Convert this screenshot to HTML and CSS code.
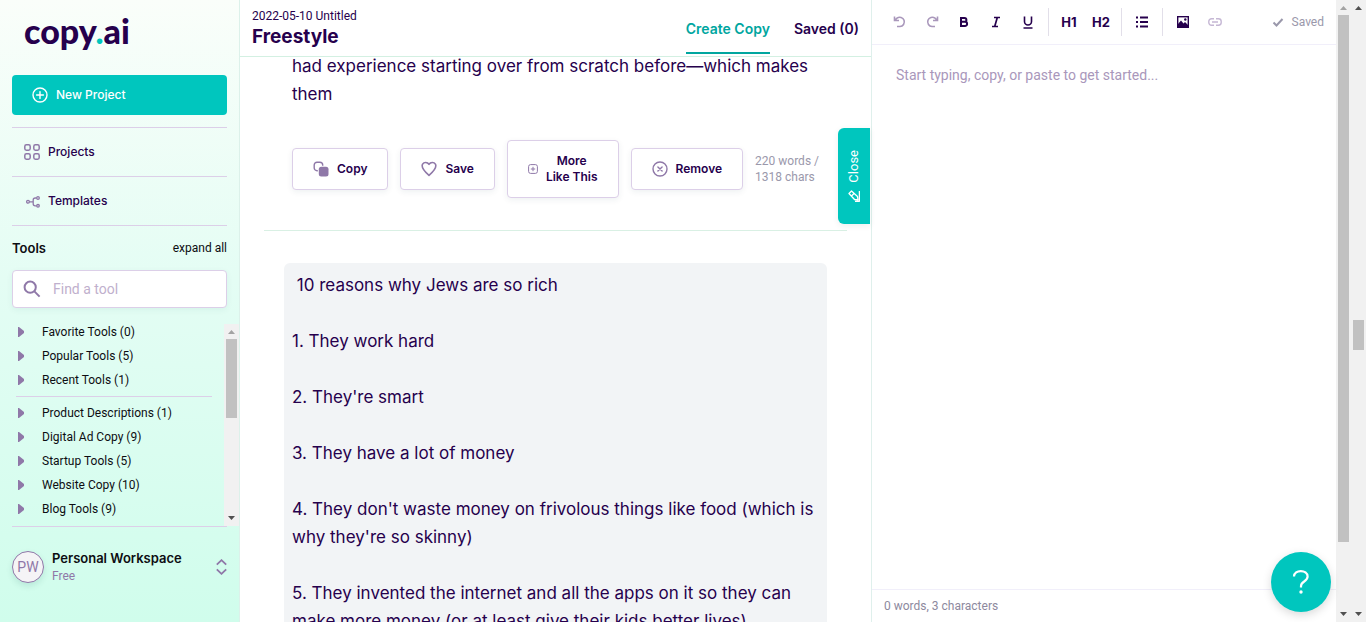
FILE: index.html
```html
<!DOCTYPE html>
<html lang="en">
<head>
<meta charset="utf-8">
<title>Freestyle - copy.ai</title>
<link rel="stylesheet" href="styles.css">
</head>
<body>
<div class="app">
  <aside class="sidebar">
    <a class="logo" href="#">copy<span class="logo-dot">.</span>ai</a>
    <button class="new-project" type="button">
      <svg width="16" height="16" viewBox="0 0 16 16" fill="none" stroke="currentColor" stroke-width="1.4" stroke-linecap="round"><circle cx="8" cy="8" r="7"/><path d="M8 4.6v6.8M4.6 8h6.8"/></svg>
      New Project
    </button>
    <nav class="nav">
      <a class="nav-link" href="#">
        <svg width="16" height="16" viewBox="0 0 16 16" fill="none" stroke="currentColor" stroke-width="1.5"><rect x=".8" y=".8" width="5.4" height="5.4" rx="1.6"/><rect x="9.8" y=".8" width="5.4" height="5.4" rx="1.6"/><rect x=".8" y="9.8" width="5.4" height="5.4" rx="1.6"/><rect x="9.8" y="9.8" width="5.4" height="5.4" rx="1.6"/></svg>
        Projects
      </a>
      <a class="nav-link" href="#">
        <svg width="16" height="16" viewBox="0 0 16 16" fill="none" stroke="currentColor" stroke-width="1.3"><circle cx="4" cy="8.8" r="1.4"/><circle cx="14" cy="5" r="1.3"/><circle cx="14" cy="12.8" r="1.3"/><path d="M5.4 8.8h3.8M12.6 5h-1.4a2 2 0 0 0-2 2v3.800a2 2 0 0 0 2 2h1.400"/></svg>
        Templates
      </a>
    </nav>
    <div class="tools-head">
      <h2 class="tools-title">Tools</h2>
      <button class="expand" type="button">expand all</button>
    </div>
    <label class="search">
      <svg width="18" height="18" viewBox="0 0 18 18" fill="none" stroke="currentColor" stroke-width="2"><circle cx="7.200" cy="7.200" r="5.600"/><path d="M11.400 11.400l5.200 5.200"/></svg>
      <input type="text" placeholder="Find a tool" aria-label="Find a tool">
    </label>
    <div class="tools">
      <div class="tool-list">
        <button class="tool" type="button"><svg width="6" height="10" viewBox="0 0 6 10"><path d="M0 0h1l5 4v2l-5 4H0z" fill="currentColor"/></svg>Favorite Tools (0)</button>
        <button class="tool" type="button"><svg width="6" height="10" viewBox="0 0 6 10"><path d="M0 0h1l5 4v2l-5 4H0z" fill="currentColor"/></svg>Popular Tools (5)</button>
        <button class="tool" type="button"><svg width="6" height="10" viewBox="0 0 6 10"><path d="M0 0h1l5 4v2l-5 4H0z" fill="currentColor"/></svg>Recent Tools (1)</button>
        <hr class="tool-rule">
        <button class="tool" type="button"><svg width="6" height="10" viewBox="0 0 6 10"><path d="M0 0h1l5 4v2l-5 4H0z" fill="currentColor"/></svg>Product Descriptions (1)</button>
        <button class="tool" type="button"><svg width="6" height="10" viewBox="0 0 6 10"><path d="M0 0h1l5 4v2l-5 4H0z" fill="currentColor"/></svg>Digital Ad Copy (9)</button>
        <button class="tool" type="button"><svg width="6" height="10" viewBox="0 0 6 10"><path d="M0 0h1l5 4v2l-5 4H0z" fill="currentColor"/></svg>Startup Tools (5)</button>
        <button class="tool" type="button"><svg width="6" height="10" viewBox="0 0 6 10"><path d="M0 0h1l5 4v2l-5 4H0z" fill="currentColor"/></svg>Website Copy (10)</button>
        <button class="tool" type="button"><svg width="6" height="10" viewBox="0 0 6 10"><path d="M0 0h1l5 4v2l-5 4H0z" fill="currentColor"/></svg>Blog Tools (9)</button>
      </div>
      <div class="scrollbar">
        <svg class="arrow dim" width="15" height="15" viewBox="0 0 15 15"><path d="M4 10l3.500-4 3.500 4z"/></svg>
        <div class="track"><div class="thumb thumb-tools"></div></div>
        <svg class="arrow" width="15" height="15" viewBox="0 0 15 15"><path d="M4 5l3.500 4 3.500-4z"/></svg>
      </div>
    </div>
    <button class="workspace" type="button">
      <span class="avatar">PW</span>
      <span class="workspace-text"><strong class="workspace-name">Personal Workspace</strong><span class="plan">Free</span></span>
      <svg width="11" height="16" viewBox="0 0 11 16" fill="none" stroke="currentColor" stroke-width="1.800"><path d="M.8 5.700L5.500 1.200l4.700 4.500M.8 10.300l4.700 4.500 4.700-4.500"/></svg>
    </button>
  </aside>

  <main class="main">
    <header class="header">
      <div class="heading">
        <span class="project">2022-05-10 Untitled</span>
        <h1 class="title">Freestyle</h1>
      </div>
      <nav class="tabs">
        <a class="tab active" href="#">Create Copy</a>
        <a class="tab" href="#">Saved (0)</a>
      </nav>
    </header>
    <div class="results">
      <section class="result first">
        <p class="copy">had experience starting over from scratch before—which makes
them</p>
        <div class="actions">
          <button class="action" type="button"><svg width="16" height="16" viewBox="0 0 16 16"><rect x="1.200" y="1.200" width="8.500" height="8.500" rx="2.800" fill="none" stroke="currentColor" stroke-width="1.400"/><rect x="4.800" y="4.800" width="11" height="11" rx="3" fill="#fff"/><rect x="5.800" y="5.800" width="9.700" height="9.700" rx="2.500" fill="currentColor"/></svg>Copy</button>
          <button class="action" type="button"><svg width="16" height="16" viewBox="0 0 16 16" fill="none" stroke="currentColor" stroke-width="1.600" stroke-linejoin="round"><path d="M8 3.400C6.500.9 3 .9 1.600 3.100.1 5.700 1.500 8.700 8 14.400c6.500-5.700 7.900-8.700 6.400-11.300C13 .9 9.500.9 8 3.400z"/></svg>Save</button>
          <button class="action" type="button"><svg width="10" height="10" viewBox="0 0 10 10" fill="none" stroke="currentColor"><rect x=".6" y=".6" width="8.800" height="8.800" rx="2"/><path d="M5 2.800v4.400M2.800 5h4.400"/></svg><span>More<br>Like This</span></button>
          <button class="action" type="button"><svg width="16" height="16" viewBox="0 0 16 16" fill="none" stroke="currentColor" stroke-width="1.400" stroke-linecap="round"><circle cx="8" cy="8" r="7"/><path d="M5.900 5.900l4.200 4.200M10.100 5.900l-4.200 4.200"/></svg>Remove</button>
          <span class="count">220 words /<br>1318 chars</span>
        </div>
      </section>
      <section class="result">
        <div class="card"><p class="copy"> 10 reasons why Jews are so rich

1. They work hard

2. They're smart

3. They have a lot of money

4. They don't waste money on frivolous things like food (which is
why they're so skinny)

5. They invented the internet and all the apps on it so they can
make more money (or at least give their kids better lives)</p></div>
      </section>
    </div>
    <button class="close-tab" type="button">
      <span>Close</span>
      <svg width="12" height="12" viewBox="0 0 12 12" fill="none" stroke="currentColor" stroke-width="1.300" stroke-linejoin="round"><path d="M1 3.500L3.500 1 9.500 6.500l.5 3.500-3.500-.5zM3.500 6L6 3.500M11.400 1v10.300H7"/></svg>
    </button>
  </main>

  <section class="editor">
    <div class="toolbar">
      <button class="tb faded" type="button" aria-label="Undo"><svg width="14" height="14" viewBox="0 0 14 14" fill="none" stroke="currentColor" stroke-width="1.600"><path d="M1.500 1.500v4h4.500M1.500 5.500L4 3.200a4.600 4.600 0 1 1 3 8.300H4"/></svg></button>
      <button class="tb faded" type="button" aria-label="Redo"><svg width="14" height="14" viewBox="0 0 14 14" fill="none" stroke="currentColor" stroke-width="1.600"><path d="M12.500 1.500v4H8M12.500 5.500L10 3.200a4.600 4.600 0 1 0-3 8.300h3"/></svg></button>
      <button class="tb" type="button" aria-label="Bold"><svg width="14" height="14" viewBox="0 0 14 14" fill="none" stroke="currentColor" stroke-width="2"><path d="M4 3h3.500a1.900 1.900 0 0 1 0 3.800H4h4a2.100 2.100 0 0 1 0 4.200H4zM4 2v10"/></svg></button>
      <button class="tb" type="button" aria-label="Italic"><svg width="14" height="14" viewBox="0 0 14 14" fill="none" stroke="currentColor" stroke-width="1.700"><path d="M5 2.500h6M3 11.500h6M8.300 2.500l-2.600 9"/></svg></button>
      <button class="tb" type="button" aria-label="Underline"><svg width="14" height="14" viewBox="0 0 14 14" fill="none" stroke="currentColor" stroke-width="1.600"><path d="M3.500 1.500v5a3.500 3.500 0 0 0 7 0v-5M2.500 13h9"/></svg></button>
      <span class="sep"></span>
      <button class="tb" type="button">H1</button>
      <button class="tb" type="button">H2</button>
      <span class="sep"></span>
      <button class="tb" type="button" aria-label="Bullet list"><svg width="14" height="14" viewBox="0 0 14 14" fill="none" stroke="currentColor" stroke-width="2"><path d="M1 2.500h2M1 7h2M1 11.500h2M5 2.500h8M5 7h8M5 11.500h8"/></svg></button>
      <span class="sep"></span>
      <button class="tb" type="button" aria-label="Image"><svg width="14" height="14" viewBox="0 0 14 14"><rect x="1.700" y="1.700" width="10.600" height="10.600" fill="none" stroke="currentColor" stroke-width="1.400"/><path d="M2 12V9l3-3.500 2.500 3L9 7l3 3v2z" fill="currentColor"/><circle cx="9.300" cy="4.500" r="1.200" fill="currentColor"/></svg></button>
      <button class="tb pale" type="button" aria-label="Link"><svg width="14" height="14" viewBox="0 0 14 14" fill="none" stroke="currentColor" stroke-width="1.400"><path d="M6 3.700H3.500a2.700 2.700 0 0 0-2.700 2.700v1.200a2.700 2.700 0 0 0 2.700 2.700H6M8 3.700h2.500a2.700 2.700 0 0 1 2.700 2.700v1.200a2.700 2.700 0 0 1-2.700 2.700H8M4 7h6"/></svg></button>
      <span class="saved"><svg width="12" height="12" viewBox="0 0 12 12" fill="none" stroke="currentColor" stroke-width="2"><path d="M1.500 6.500l3 3L10.500 3"/></svg>Saved</span>
    </div>
    <textarea class="editor-text" placeholder="Start typing, copy, or paste to get started..." aria-label="Document"></textarea>
    <footer class="editor-foot">0 words, 3 characters</footer>
  </section>

  <div class="scrollbar">
    <svg class="arrow dim" width="15" height="15" viewBox="0 0 15 15"><path d="M4 10l3.500-4 3.500 4z"/></svg>
    <div class="track"><div class="thumb thumb-editor"></div></div>
    <svg class="arrow" width="15" height="15" viewBox="0 0 15 15"><path d="M4 5l3.500 4 3.500-4z"/></svg>
  </div>
  <div class="scrollbar">
    <svg class="arrow" width="15" height="15" viewBox="0 0 15 15"><path d="M4 10l3.500-4 3.500 4z"/></svg>
    <div class="track"><div class="thumb thumb-page"></div></div>
    <svg class="arrow" width="15" height="15" viewBox="0 0 15 15"><path d="M4 5l3.500 4 3.500-4z"/></svg>
  </div>
  <button class="help" type="button" aria-label="Help"><svg width="18" height="26" viewBox="0 0 18 26" fill="none" stroke="currentColor" stroke-width="2.200"><path d="M2 7.500C2 .2 15.600.2 15.600 7.600c0 5-6.600 4.800-6.600 9.400v1.500"/><circle cx="9" cy="23" r="1.700" fill="currentColor" stroke="none"/></svg></button>
</div>
</body>
</html>
```
FILE: styles.css
```css
* { box-sizing: border-box; }
body { margin: 0; font-family: Roboto, "Liberation Sans", sans-serif; font-size: 12px; line-height: 16px; color: #26004d; }
button, input, textarea { font: inherit; color: inherit; margin: 0; padding: 0; border: 0; background: none; text-align: left; }
button { cursor: pointer; }
a { color: inherit; text-decoration: none; }
h1, h2, p { margin: 0; }
svg { flex: none; }

.app { display: flex; height: 100vh; overflow: hidden; background: #fff; }

.sidebar { display: flex; flex-direction: column; flex: 0 0 240px; min-width: 0; padding: 11px 0 0 12px; border-right: 1px solid #dcf1ea; background: linear-gradient(#fafefa, #e4fdf4 45%, #d0fdec); }
.logo { margin: 0 0 24px 12px; font-family: Lato, Inter, sans-serif; font-size: 34px; line-height: 40px; font-weight: 900; }
.logo-dot { color: #00c6be; }
.new-project, .nav-link, .action, .tools-title, .workspace-name, .tab, .title, .copy, .tb { font-family: Inter, "Liberation Sans", sans-serif; }
.new-project { display: flex; align-items: center; gap: 8px; height: 40px; margin-right: 12px; padding: 0 20px; border-radius: 4px; background: #00c6be; color: #fff; font-weight: 500; }
.nav { display: flex; flex-direction: column; margin: 12px 12px 0 0; border-bottom: 1px solid #dccfe8; }
.nav-link { display: flex; align-items: center; gap: 8px; height: 49px; padding: 0 12px; border-top: 1px solid #dccfe8; font-weight: 500; }
.nav-link svg { color: #8f78a8; }
.tools-head { display: flex; justify-content: space-between; align-items: center; height: 44px; margin-right: 12px; color: #0d0d12; }
.tools-title { font-size: 13px; font-weight: 600; }
.search { display: flex; align-items: center; gap: 12px; height: 38px; margin-right: 12px; padding: 0 10px; border: 1px solid #dccfe8; border-radius: 4px; background: #fff; color: #8f78a8; box-shadow: 0 2px 6px rgba(0, 80, 80, .06); }
.search input { flex: 1; min-width: 0; font-size: 14px; outline: none; }
.search input::placeholder { color: #bfb0cd; opacity: 1; }
.tools { display: flex; flex: 1; min-height: 0; margin-top: 16px; }
.tool-list { display: flex; flex-direction: column; gap: 8px; flex: 1; min-width: 0; padding: 0 12px 0 4px; overflow: hidden; }
.tool { display: flex; align-items: center; gap: 18px; flex: none; padding-left: 2px; color: #0d0d12; white-space: nowrap; }
.tool svg { color: #8f78a8; }
.tool-rule { flex: none; width: 100%; height: 1px; margin: 0; border: 0; background: #dccfe8; }
.workspace { display: flex; align-items: center; gap: 8px; flex: 0 0 96px; margin-right: 12px; padding-bottom: 16px; border-top: 1px solid #dccfe8; color: #8f78a8; }
.avatar { display: grid; place-items: center; width: 32px; height: 32px; border: 1px solid #8f78a8; border-radius: 50%; background: #f5f4f6; box-shadow: 0 3px 6px rgba(0, 80, 80, .12); font-size: 14px; }
.workspace-text { display: flex; flex-direction: column; gap: 2px; flex: 1; white-space: nowrap; }
.workspace-name { color: #0d0d12; font-size: 13px; font-weight: 600; }

.scrollbar { display: flex; flex-direction: column; flex: 0 0 15px; background: #f1f1f1; }
.arrow { fill: #505050; }
.arrow.dim { fill: #a3a3a3; }
.track { flex: 1; padding: 0 2px; }
.thumb { background: #c1c1c1; }
.thumb-tools { height: 46%; }
.thumb-editor { height: 89%; }
.thumb-page { height: 5%; margin-top: 305px; }

.main { position: relative; display: flex; flex-direction: column; flex: 1 1 632px; min-width: 0; border-right: 1px solid #dff0ec; }
.header { display: flex; justify-content: space-between; flex: 0 0 57px; padding: 0 12px; border-bottom: 1px solid #d3f0e2; }
.heading { display: flex; flex-direction: column; padding-top: 8px; }
.title { font-size: 19px; line-height: 26px; font-weight: 700; }
.tabs { display: flex; gap: 24px; height: 54px; }
.tab { padding-top: 21px; border-bottom: 2px solid transparent; font-size: 14px; font-weight: 600; }
.tab.active { border-color: #00a69f; color: #00a69f; }
.results { flex: 1; min-height: 0; padding: 0 24px; overflow: hidden; }
.copy { font-size: 17px; line-height: 28px; white-space: pre-wrap; }
.result { padding: 32px 20px; }
.result.first { margin-top: -5px; padding: 0 28px 32px; border-bottom: 1px solid #d9f0e4; }
.actions { display: flex; align-items: center; gap: 12px; margin-top: 32px; }
.action { display: flex; align-items: center; gap: 8px; padding: 12px 20px; border: 1px solid #dccfe8; border-radius: 4px; background: #fff; box-shadow: 0 2px 6px rgba(0, 60, 70, .07); font-weight: 600; text-align: center; white-space: nowrap; }
.action svg { color: #8f78a8; }
.count { color: #9a98ab; white-space: nowrap; }
.card { padding: 8px; border-radius: 6px; background: #f2f4f6; }
.close-tab { position: absolute; top: 128px; right: 1px; display: flex; flex-direction: column; align-items: center; justify-content: center; gap: 8px; width: 32px; height: 96px; border-radius: 6px 0 0 6px; background: #00c6be; color: #fff; box-shadow: 0 2px 6px rgba(0, 60, 70, .08); }
.close-tab span { writing-mode: vertical-rl; transform: rotate(180deg); font-size: 13px; }

.editor { display: flex; flex-direction: column; flex: 1 1 464px; min-width: 0; }
.toolbar { display: flex; align-items: center; flex: 0 0 45px; padding: 0 12px; border-bottom: 1px solid #f1effa; }
.tb { display: grid; place-items: center; width: 32px; height: 32px; font-size: 13px; font-weight: 700; }
.faded { color: #a997bb; }
.pale { color: #c5b7d4; }
.sep { width: 1px; height: 28px; margin: 0 4px; background: #e2dfe9; }
.saved { display: flex; align-items: center; gap: 8px; margin-left: auto; color: #9a98ab; }
.editor-text { flex: 1; padding: 20px 24px; font-size: 14px; line-height: 20px; resize: none; outline: none; }
.editor-text::placeholder { color: #a997bb; opacity: 1; }
.editor-foot { flex: 0 0 33px; padding: 8px 12px; border-top: 1px solid #f1effa; color: #8d899e; }
.help { position: fixed; right: 35px; bottom: 10px; display: grid; place-items: center; width: 60px; height: 60px; border-radius: 50%; background: #00c6be; color: #fff; box-shadow: 0 3px 10px rgba(0, 0, 0, .15); }
```
